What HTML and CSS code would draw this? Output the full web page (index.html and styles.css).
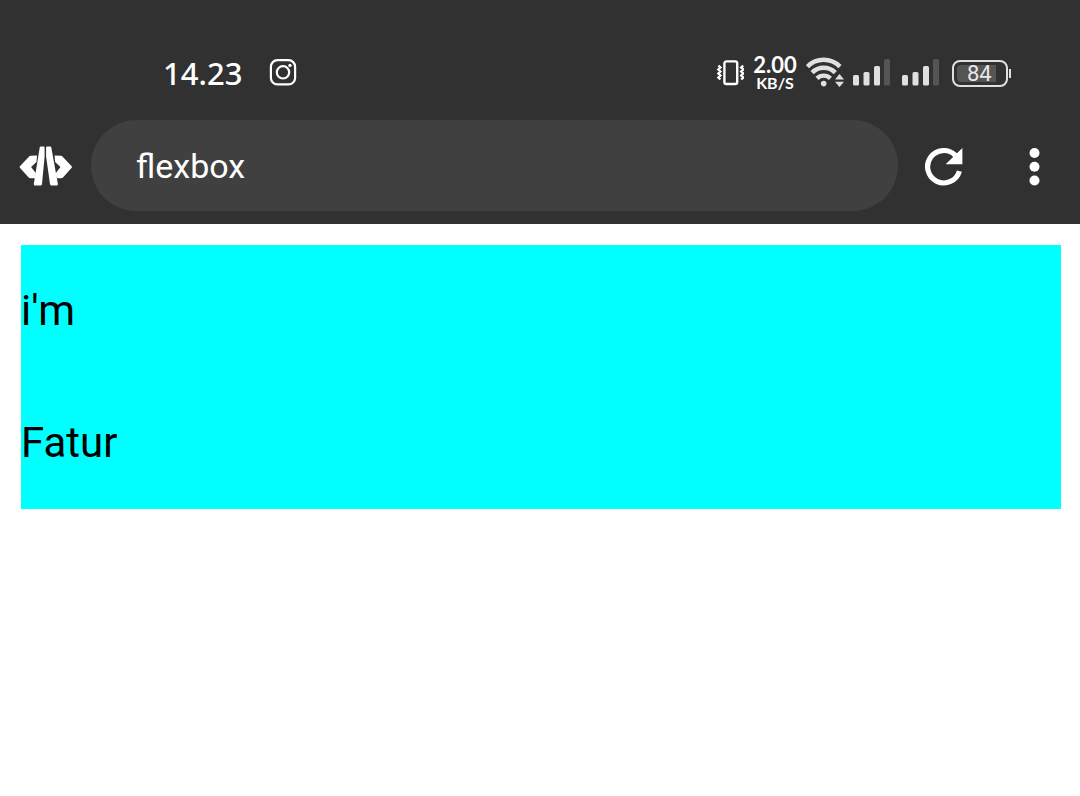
FILE: index.html
```html
<!DOCTYPE html>
<html lang="en">
<head>
<meta charset="utf-8">
<meta name="viewport" content="width=device-width">
<title>flexbox</title>
<link rel="stylesheet" href="styles.css">
</head>
<body>
<header class="header">
  <div class="status">
    <div class="status-left">
      <span class="time">14.23</span>
      <svg width="28" height="28" viewBox="0 0 28 28" fill="none" stroke="#fff" aria-hidden="true">
        <rect x="1.9" y="1.2" width="24.2" height="24.2" rx="6.5" stroke-width="2.2"/>
        <circle cx="14" cy="13.3" r="6.2" stroke-width="2.2"/>
        <circle cx="21" cy="6.4" r="1.7" fill="#fff" stroke="none"/>
      </svg>
    </div>
    <div class="status-right">
      <svg width="28" height="30" viewBox="0 0 28 30" fill="none" stroke="#fff" aria-hidden="true">
        <rect x="8.4" y="3.4" width="12.8" height="22.6" rx="2" stroke-width="2.4"/>
        <path d="M2.4 7.6l2 1.9-2 2 2 2-2 2 2 2-2 2 2 2M27.2 7.6l-2 1.9 2 2-2 2 2 2-2 2 2 2-2 2" stroke-width="2.4"/>
      </svg>
      <div class="speed"><span class="speed-value">2.00</span><span class="speed-unit">KB/S</span></div>
      <svg width="39" height="32" viewBox="0 0 39 32" fill="none" stroke="#e0e0e0" stroke-width="4.4" aria-hidden="true">
        <path d="M1.4 9.6a22.8 22.8 0 0 1 32.6 0M6.1 15.6a16.2 16.2 0 0 1 23.2 0M11 21.4a9.4 9.4 0 0 1 13.4 0"/>
        <circle cx="17.7" cy="26.6" r="2.8" fill="#e0e0e0" stroke="none"/>
        <path d="M29 22.6l4.5-5.6 4.5 5.6zM29 24.7l4.5 5.3 4.5-5.3z" fill="#e0e0e0" stroke="none"/>
      </svg>
      <svg width="41" height="28" viewBox="0 0 41 28" fill="#e0e0e0" aria-hidden="true">
        <rect x="0" y="16" width="6" height="10.6" rx="1.5"/><rect x="10.5" y="13" width="6" height="13.6" rx="1.5"/><rect x="21" y="7" width="6" height="19.6" rx="1.5"/><rect class="bar-off" x="31" y="0" width="6" height="26.6" rx="1.5"/>
      </svg>
      <svg width="41" height="28" viewBox="0 0 41 28" fill="#e0e0e0" aria-hidden="true">
        <rect x="0" y="16" width="6" height="10.6" rx="1.5"/><rect x="10.5" y="13" width="6" height="13.6" rx="1.5"/><rect x="21" y="7" width="6" height="19.6" rx="1.5"/><rect class="bar-off" x="31" y="0" width="6" height="26.6" rx="1.5"/>
      </svg>
      <div class="battery"><span class="battery-cell"><span class="battery-fill">84</span></span><span class="battery-tip"></span></div>
    </div>
  </div>
  <div class="toolbar">
    <svg width="54" height="42" viewBox="0 0 54 42" fill="#fff" aria-hidden="true">
      <path d="M18 10.6l-6.2.2q-1.3.1-2.1 1.1L.9 21.2q-.6.8 0 1.5l8.5 9.6q.9.9 2.2.9h4.2l1.3-4.8-5-6.3 5.4-5.2zM35.6 10.6l6.2.2q1.3.1 2.1 1.1l8.8 9.3q.6.8 0 1.5l-8.5 9.6q-.9.9-2.2.9h-4.2l-1.3-4.8 5-6.3-5.4-5.2z"/>
      <path d="M20.7 2.6q.2-1 1.2-1h2.6q1.2 0 1.1 1v9L23 39q-.1 1.5-1.6 1.5h-5.1q-1.7 0-1.5-1.5zM32.3 2.6q-.2-1-1.2-1h-2.9q-1.2 0-1.1 1v9L31 39q.2 1.5 1.7 1.5h4.7q1.7 0 1.5-1.5z"/>
    </svg>
    <input class="address" type="text" value="flexbox" aria-label="Page title">
    <button class="icon-button reload" type="button" aria-label="Reload">
      <svg width="40" height="40" viewBox="0 0 40 40" aria-hidden="true">
        <path d="M35.4 25.1A16.2 16.2 0 1 1 31.4 9.4" fill="none" stroke="#fff" stroke-width="5.2"/>
        <path d="M38.4 2v16.2H21.6z" fill="#fff"/>
      </svg>
    </button>
    <button class="icon-button" type="button" aria-label="Menu">
      <svg width="12" height="40" viewBox="0 0 12 40" fill="#fff" aria-hidden="true">
        <circle cx="6.5" cy="7" r="5"/><circle cx="6.5" cy="20.8" r="5"/><circle cx="6.5" cy="34.5" r="5"/>
      </svg>
    </button>
  </div>
</header>
<main class="page">
  <div class="container">
    <p class="item">i'm</p>
    <p class="item">Fatur</p>
  </div>
</main>
</body>
</html>
```
FILE: styles.css
```css
* {
  box-sizing: border-box;
}

body {
  margin: 0;
  background: #fff;
  font-family: Roboto, sans-serif;
}

.header {
  padding: 26px 0 13px;
  background: #313131;
  color: #fff;
}

.header svg {
  display: block;
  flex: none;
}

.status {
  display: flex;
  align-items: center;
  justify-content: space-between;
  height: 94px;
  padding: 0 69px 0 163px;
  font-family: "Noto Sans", sans-serif;
}

.status-left {
  display: flex;
  align-items: center;
  gap: 27px;
}

.time {
  font-size: 31px;
  font-weight: 500;
  line-height: 36px;
}

.status-right {
  display: flex;
  align-items: center;
  gap: 8px;
}

.speed {
  display: flex;
  flex-direction: column;
  align-items: center;
  width: 46px;
  font-family: Lato, sans-serif;
  font-weight: 700;
}

.speed-value {
  font-size: 22px;
  line-height: 18px;
}

.speed-unit {
  font-size: 16px;
  line-height: 17px;
}

.bar-off {
  fill: #555;
}

.battery {
  display: flex;
  align-items: center;
  gap: 1px;
  width: 59px;
  margin-left: 1px;
}

.battery-cell {
  flex: 1;
  height: 27px;
  padding: 3px 10px 3px 3px;
  border: 2px solid #e0e0e0;
  border-radius: 8px;
}

.battery-fill {
  display: block;
  padding-left: 10px;
  border-radius: 4px 0 0 4px;
  background: #555;
  color: #e8e8e8;
  font-family: Roboto, sans-serif;
  font-size: 22px;
  line-height: 17px;
}

.battery-tip {
  width: 2px;
  height: 9px;
  background: #e0e0e0;
}

.toolbar {
  display: flex;
  align-items: center;
  padding: 0 28px 0 19px;
}

.address {
  flex: 1;
  min-width: 0;
  height: 91px;
  margin: 0 14px 0 18px;
  padding: 0 45px;
  border: 0;
  border-radius: 46px;
  outline: 0;
  background: #404040;
  color: #fff;
  font: 34px Roboto, sans-serif;
}

.icon-button {
  padding: 12px;
  border: 0;
  background: none;
}

.reload {
  margin-right: 40px;
}

.page {
  padding: 21px 19px 21px 21px;
}

.container {
  background: #0ff;
  color: #000;
}

.item {
  margin: 0;
  font-size: 42px;
  line-height: 132px;
}
```
